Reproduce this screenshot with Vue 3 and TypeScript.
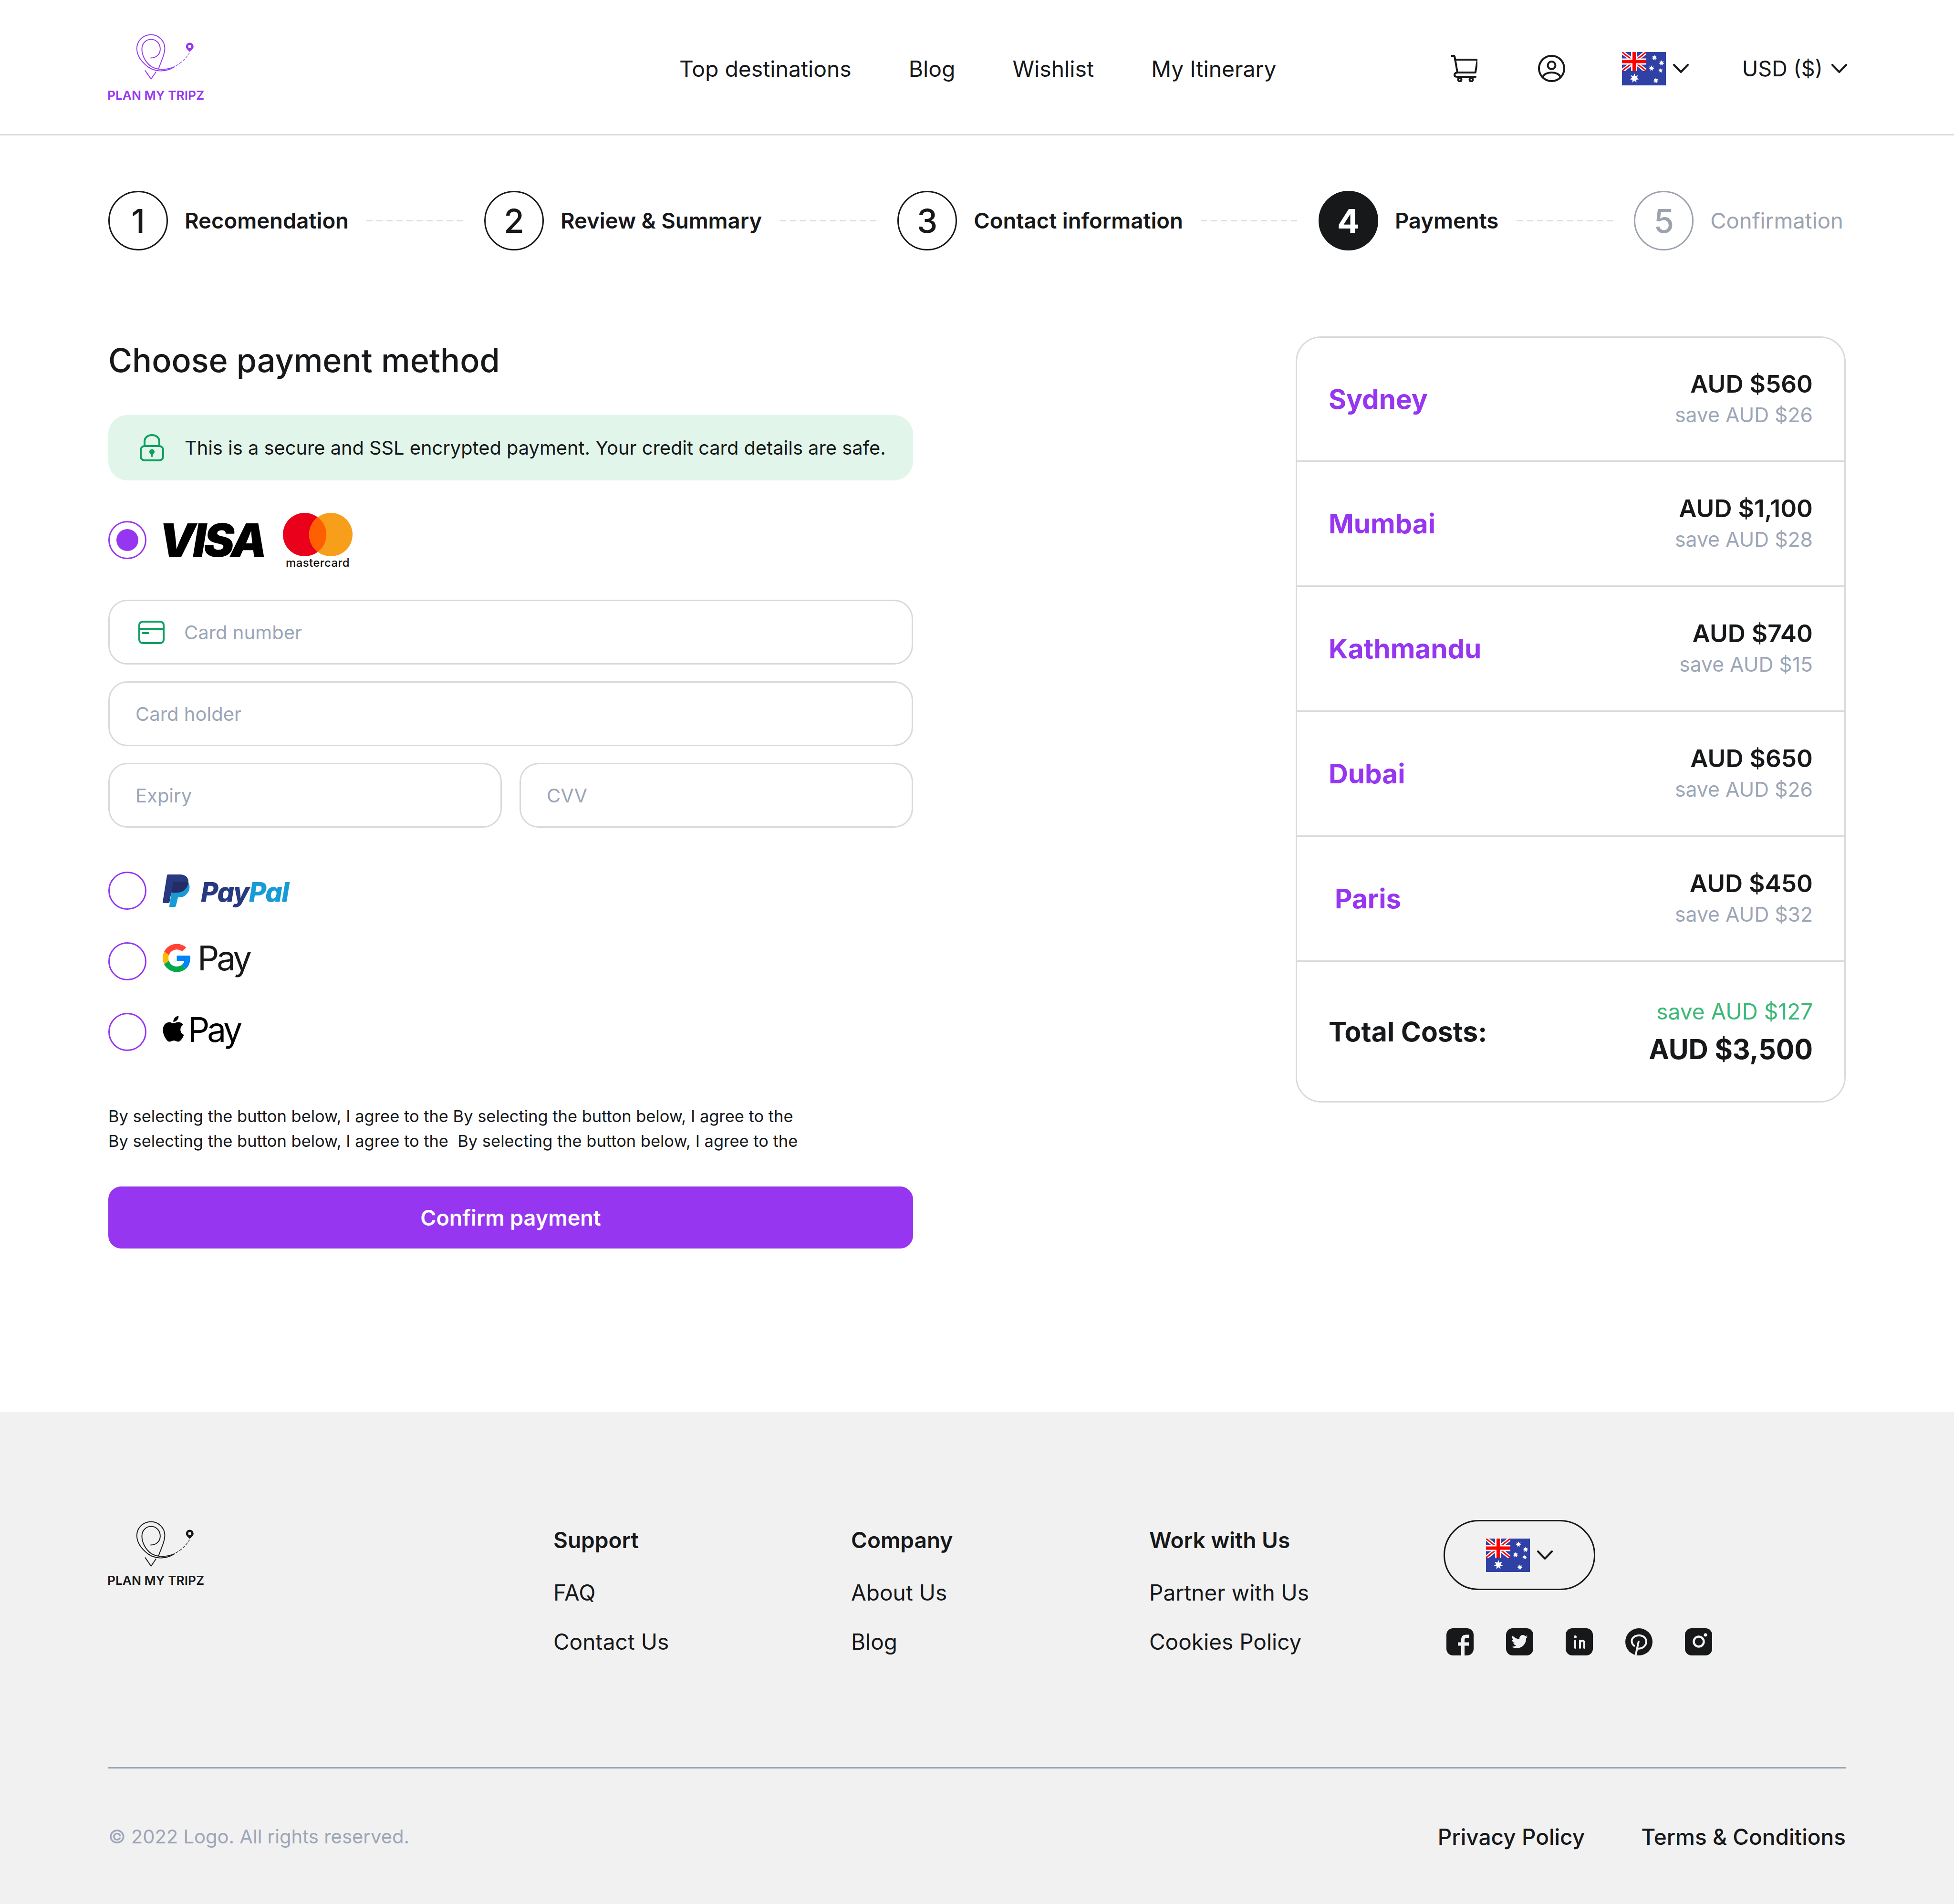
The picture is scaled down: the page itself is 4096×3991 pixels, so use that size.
<script setup lang="ts">
const steps = [
  { n: 1, label: 'Recomendation', state: 'done' },
  { n: 2, label: 'Review & Summary', state: 'done' },
  { n: 3, label: 'Contact information', state: 'done' },
  { n: 4, label: 'Payments', state: 'active' },
  { n: 5, label: 'Confirmation', state: 'todo' }
]

const cities = [
  { name: 'Sydney', price: 'AUD $560', save: 'save AUD $26' },
  { name: 'Mumbai', price: 'AUD $1,100', save: 'save AUD $28' },
  { name: 'Kathmandu', price: 'AUD $740', save: 'save AUD $15' },
  { name: 'Dubai', price: 'AUD $650', save: 'save AUD $26' },
  { name: 'Paris', price: 'AUD $450', save: 'save AUD $32', indent: true }
]

const footerCols = [
  { title: 'Support', links: ['FAQ', 'Contact Us'] },
  { title: 'Company', links: ['About Us', 'Blog'] },
  { title: 'Work with Us', links: ['Partner with Us', 'Cookies Policy'] }
]

// 7 pointed stars for the flag
function star(cx: number, cy: number, r: number) {
  const pts: string[] = []
  for (let i = 0; i < 14; i++) {
    const rad = i % 2 ? r * 0.5 : r
    const a = (Math.PI * i) / 7 - Math.PI / 2
    pts.push(`${(cx + rad * Math.cos(a)).toFixed(2)},${(cy + rad * Math.sin(a)).toFixed(2)}`)
  }
  return pts.join(' ')
}

const flagStars = [
  star(68, 12, 6),
  star(83, 23, 6),
  star(62, 34, 6),
  star(81, 39, 5),
  star(26, 55, 10),
  star(71, 60, 6)
]
</script>

<template>
  <div class="page">
    <svg class="defs" aria-hidden="true">
      <symbol id="logo-mark" viewBox="300 125 390 305">
        <g fill="none" stroke="currentColor" stroke-width="6" stroke-linecap="round" stroke-linejoin="round">
          <path d="M557 345C510 375 440 385 385 345C340 310 312 270 312 225C312 175 352 135 405 135C455 135 495 175 495 225C495 265 470 310 455 355" />
          <path d="M437 378L405 425L367 370" />
          <path d="M403 287C440 287 465 262 465 228C465 192 438 165 405 165C372 165 345 192 345 228C345 270 370 320 410 345C450 368 510 365 557 345" />
          <path d="M568 338Q620 310 656 254" stroke-width="4" stroke-dasharray="16 12" />
        </g>
        <path fill="currentColor" fill-rule="evenodd" d="M658 187a25 25 0 0 1 25 25c0 14-14 24-25 34c-11-10-25-20-25-34a25 25 0 0 1 25-25zm0 15a10 10 0 1 0 0 20a10 10 0 0 0 0-20z" />
      </symbol>
      <symbol id="flag-au" viewBox="0 0 92 70">
        <rect width="92" height="70" fill="#2f41a5" />
        <svg width="51" height="40" viewBox="0 0 51 40">
          <path d="M0 0L51 40M51 0L0 40" stroke="#fff" stroke-width="8" />
          <path d="M0 0L51 40M51 0L0 40" stroke="#f00" stroke-width="3" />
          <path d="M25.500 0V40M0 20H51" stroke="#fff" stroke-width="13" />
          <path d="M25.500 0V40M0 20H51" stroke="#f00" stroke-width="7" />
        </svg>
        <polygon v-for="(pts, i) in flagStars" :key="i" :points="pts" fill="#fff" />
      </symbol>
      <symbol id="chevron" viewBox="0 0 33 19">
        <path d="M2 2L16.500 17L31 2" fill="none" stroke="currentColor" stroke-width="4" stroke-linecap="round" stroke-linejoin="round" />
      </symbol>
    </svg>

    <header class="topbar">
      <div class="logo brand-purple">
        <svg class="logo-mark"><use href="#logo-mark" /></svg>
        <span class="logo-text">PLAN MY TRIPZ</span>
      </div>
      <nav class="nav">
        <a>Top destinations</a>
        <a>Blog</a>
        <a>Wishlist</a>
        <a>My Itinerary</a>
      </nav>
      <div class="tools">
        <svg class="cart" viewBox="0 0 55 57" fill="none" stroke="currentColor" stroke-width="4" stroke-linecap="round" stroke-linejoin="round">
          <path d="M1 2H5Q7 2 7.500 5L13 37Q7 38 7 42Q7 46 13 46H51" />
          <path d="M8 10H51Q55 10 54.500 14L51 36Q50.800 37 49 37H13" />
          <circle cx="18" cy="52" r="3.500" />
          <circle cx="42" cy="52" r="3.500" />
        </svg>
        <svg class="user" viewBox="0 0 57 57" fill="none" stroke="currentColor" stroke-width="4">
          <circle cx="28.500" cy="28.500" r="26.500" />
          <circle cx="28.500" cy="22" r="8" />
          <path d="M9 47C13 40 20 37 28.500 37C37 37 44 40 48 47" />
        </svg>
        <div class="flag-select">
          <svg class="flag"><use href="#flag-au" /></svg>
          <svg class="chev"><use href="#chevron" /></svg>
        </div>
        <div class="currency">
          <span>USD ($)</span>
          <svg class="chev"><use href="#chevron" /></svg>
        </div>
      </div>
    </header>

    <main class="main">
      <div class="steps">
        <template v-for="(s, i) in steps" :key="s.n">
          <div class="step" :class="s.state">
            <span class="step-num">{{ s.n }}</span>
            <span class="step-label">{{ s.label }}</span>
          </div>
          <i v-if="i < steps.length - 1" class="step-dash"></i>
        </template>
      </div>

      <div class="checkout">
        <section class="pay">
          <h1>Choose payment method</h1>
          <div class="secure">
            <svg class="lock" viewBox="0 0 51 57" fill="none" stroke="currentColor" stroke-width="4" stroke-linecap="round">
              <path d="M10 25V15.500C10 7 17 2 25.500 2C34 2 41 7 41 15.500V25" />
              <rect x="2" y="25" width="47" height="30" rx="8" />
              <circle cx="25.500" cy="37" r="3.500" fill="currentColor" />
              <path d="M25.500 38V46" />
            </svg>
            <span>This is a secure and SSL encrypted payment. Your credit card details are safe.</span>
          </div>

          <div class="card-row">
            <span class="radio checked"></span>
            <span class="visa">VISA</span>
            <div class="mc">
              <svg class="mc-mark" viewBox="0 0 146 91">
                <circle cx="45.500" cy="45.500" r="45.500" fill="#eb001b" />
                <circle cx="100.500" cy="45.500" r="45.500" fill="#f79e1b" />
                <path d="M73 9.100a45.500 45.500 0 0 1 0 72.800a45.500 45.500 0 0 1 0-72.800z" fill="#ff5f00" />
              </svg>
              <span>mastercard</span>
            </div>
          </div>

          <div class="fields">
            <div class="field with-icon">
              <svg class="card-icon" viewBox="0 0 55 49" fill="none" stroke="currentColor" stroke-width="4" stroke-linecap="round">
                <rect x="2" y="2" width="51" height="45" rx="7" />
                <path d="M2 17H53" />
                <path d="M9 26H21" />
              </svg>
              <span>Card number</span>
            </div>
            <div class="field">Card holder</div>
            <div class="field-pair">
              <div class="field">Expiry</div>
              <div class="field">CVV</div>
            </div>
          </div>

          <div class="methods">
            <div class="method">
              <span class="radio"></span>
              <div class="paypal">
                <svg class="paypal-mark" viewBox="0 0 58 68">
                  <path fill="#27397f" d="M11 0H36C48 0 55 7 54 17C52 30 43 38 30 38H18L14 60H1Q0 60 0 58L9 2Q9.500 0 11 0Z" />
                  <path fill="#179bd7" d="M22 15H50Q53 15 54 17C58 24 57 33 52 39C48 45 42 48 35 48H32L28 65Q27.500 68 25 68H14.500Q13.500 68 14 66Z" />
                  <path fill="#232c65" d="M22 15H50Q53 15 54 17C52 30 43 38 30 38H18Z" />
                </svg>
                <span class="paypal-text"><b>Pay</b><em>Pal</em></span>
              </div>
            </div>
            <div class="method">
              <span class="radio"></span>
              <div class="gpay">
                <svg class="g-mark" viewBox="0 0 48 48">
                  <path fill="#ff4335" d="M24 9.500c3.540 0 6.710 1.220 9.210 3.600l6.850-6.850C35.900 2.380 30.470 0 24 0 14.620 0 6.510 5.380 2.560 13.220l7.980 6.190C12.430 13.720 17.740 9.500 24 9.500z" />
                  <path fill="#0085f7" d="M46.980 24.550c0-1.570-.15-3.090-.38-4.550H24v9.020h12.940c-.58 2.960-2.260 5.480-4.780 7.180l7.730 6c4.510-4.180 7.090-10.360 7.090-17.650z" />
                  <path fill="#ffba00" d="M10.530 28.590c-.48-1.450-.76-2.990-.76-4.590s.27-3.140.76-4.590l-7.980-6.190C.92 16.460 0 20.120 0 24c0 3.880.92 7.540 2.560 10.780l7.970-6.190z" />
                  <path fill="#00a94b" d="M24 48c6.480 0 11.930-2.130 15.890-5.810l-7.730-6c-2.150 1.450-4.920 2.300-8.160 2.300-6.260 0-11.570-4.220-13.470-9.910l-7.980 6.190C6.510 42.620 14.620 48 24 48z" />
                </svg>
                <span class="pay-word">Pay</span>
              </div>
            </div>
            <div class="method">
              <span class="radio"></span>
              <div class="apay">
                <svg class="apple-mark" viewBox="2 0 20 24">
                  <path fill="#000" d="M12.152 6.896c-.948 0-2.415-1.078-3.960-1.040-2.040.027-3.910 1.183-4.961 3.014-2.117 3.675-.546 9.103 1.519 12.090 1.013 1.454 2.208 3.090 3.792 3.039 1.520-.065 2.090-.987 3.935-.987 1.831 0 2.350.987 3.960.948 1.637-.026 2.676-1.480 3.676-2.948 1.156-1.688 1.636-3.325 1.662-3.415-.039-.013-3.182-1.221-3.220-4.857-.026-3.040 2.480-4.494 2.597-4.559-1.429-2.090-3.623-2.324-4.390-2.376-2-.156-3.675 1.090-4.610 1.090zM15.530 3.830c.843-1.012 1.400-2.427 1.245-3.830-1.207.052-2.662.805-3.532 1.818-.780.896-1.454 2.338-1.273 3.714 1.338.104 2.715-.688 3.559-1.701" />
                </svg>
                <span class="pay-word">Pay</span>
              </div>
            </div>
          </div>

          <p class="terms">
            By selecting the button below, I agree to the By selecting the button below, I agree to the<br />
            By selecting the button below, I agree to the&nbsp; By selecting the button below, I agree to the
          </p>

          <button class="confirm">Confirm payment</button>
        </section>

        <aside class="summary">
          <div v-for="c in cities" :key="c.name" class="summary-row">
            <span class="city" :class="{ indent: c.indent }">{{ c.name }}</span>
            <div class="amount">
              <div class="price">{{ c.price }}</div>
              <div class="save">{{ c.save }}</div>
            </div>
          </div>
          <div class="summary-row total">
            <span class="total-label">Total Costs:</span>
            <div class="amount">
              <div class="save green">save AUD $127</div>
              <div class="total-price">AUD $3,500</div>
            </div>
          </div>
        </aside>
      </div>
    </main>

    <footer class="footer">
      <div class="footer-top">
        <div class="logo">
          <svg class="logo-mark"><use href="#logo-mark" /></svg>
          <span class="logo-text">PLAN MY TRIPZ</span>
        </div>
        <div v-for="col in footerCols" :key="col.title" class="footer-col">
          <h4>{{ col.title }}</h4>
          <a v-for="l in col.links" :key="l">{{ l }}</a>
        </div>
        <div class="footer-side">
          <div class="lang-pill">
            <svg class="flag"><use href="#flag-au" /></svg>
            <svg class="chev"><use href="#chevron" /></svg>
          </div>
          <div class="socials">
            <svg viewBox="0 0 57 57">
              <rect width="57" height="57" rx="14" fill="#17181a" />
              <path d="M34.500 57V24Q34.500 17 42 17H47M24 33H47" fill="none" stroke="#f1f1f1" stroke-width="7" />
            </svg>
            <svg viewBox="0 0 57 57">
              <rect width="57" height="57" rx="14" fill="#17181a" />
              <path transform="translate(11.500 11) scale(1.420)" fill="#f1f1f1" d="M23.953 4.570a10 10 0 01-2.825.775 4.958 4.958 0 002.163-2.723c-.951.555-2.005.959-3.127 1.184a4.920 4.920 0 00-8.384 4.482C7.690 8.095 4.067 6.130 1.640 3.162a4.822 4.822 0 00-.666 2.475c0 1.710.870 3.213 2.188 4.096a4.904 4.904 0 01-2.228-.616v.060a4.923 4.923 0 003.946 4.827 4.996 4.996 0 01-2.212.085 4.936 4.936 0 004.604 3.417 9.867 9.867 0 01-6.102 2.105c-.390 0-.779-.023-1.170-.067a13.995 13.995 0 007.557 2.209c9.053 0 13.998-7.496 13.998-13.985 0-.210 0-.420-.015-.630A9.935 9.935 0 0024 4.590z" />
            </svg>
            <svg viewBox="0 0 57 57">
              <rect width="57" height="57" rx="14" fill="#17181a" />
              <circle cx="20" cy="18" r="3" fill="#f1f1f1" />
              <path d="M20 26V41M30 41V26M30 32Q31 26 35 26Q39 26 39 32V41" fill="none" stroke="#f1f1f1" stroke-width="4" stroke-linecap="round" />
            </svg>
            <svg viewBox="0 0 57 57">
              <circle cx="28.500" cy="28.500" r="28.500" fill="#17181a" />
              <path d="M18.500 36.700C15 34 13.500 30 13.500 26.700C13.500 20 20 15 29 15C37 15 43.800 20 43.800 28.300C43.800 36 37 42.700 27 42.700M27.800 28.300L22 55" fill="none" stroke="#f1f1f1" stroke-width="4" stroke-linecap="round" />
            </svg>
            <svg viewBox="0 0 57 57">
              <rect width="57" height="57" rx="14" fill="#17181a" />
              <circle cx="29" cy="28" r="10.500" fill="none" stroke="#f1f1f1" stroke-width="4.500" />
              <circle cx="43" cy="14" r="3.500" fill="#f1f1f1" />
            </svg>
          </div>
        </div>
      </div>
      <div class="footer-bottom">
        <span class="copy">© 2022 Logo. All rights reserved.</span>
        <div class="legal">
          <a>Privacy Policy</a>
          <a>Terms &amp; Conditions</a>
        </div>
      </div>
    </footer>
  </div>
</template>

<style>
html,
body {
  margin: 0;
  background: #fff;
}
</style>

<style scoped>
.page {
  width: 4096px;
  font-family: Inter, 'Noto Sans', sans-serif;
  color: #17181a;
}

.defs {
  display: none;
}

/* header */
.topbar {
  height: 284px;
  box-sizing: border-box;
  border-bottom: 3px solid #dcdcdc;
  padding: 6px 224px 0 227px;
  display: flex;
  align-items: center;
}

.logo {
  width: 206px;
  margin-left: -2px;
  display: flex;
  flex-direction: column;
  align-items: flex-end;
}

.topbar .logo {
  margin-bottom: 6px;
}

.brand-purple {
  color: #9636f0;
}

.logo-mark {
  width: 125px;
  height: 99px;
  margin-right: 23px;
}

.logo-text {
  width: 206px;
  margin-top: 15px;
  font-size: 26.300px;
  line-height: 26px;
  font-weight: 600;
  white-space: nowrap;
}

.topbar .logo-text {
  margin-top: 19px;
}

.nav {
  margin-left: 993px;
  display: flex;
  gap: 120px;
  font-size: 46.300px;
  line-height: 60px;
  white-space: nowrap;
}

.tools {
  margin-left: auto;
  display: flex;
  align-items: center;
}

.cart {
  width: 55px;
  height: 57px;
}

.user {
  width: 57px;
  height: 57px;
  margin-left: 127px;
}

.flag-select {
  margin-left: 119px;
  display: flex;
  align-items: center;
  gap: 15px;
}

.flag {
  width: 92px;
  height: 70px;
}

.chev {
  width: 33px;
  height: 19px;
}

.currency {
  margin-left: 112px;
  display: flex;
  align-items: center;
  gap: 18px;
  font-size: 45px;
  line-height: 60px;
  white-space: nowrap;
}

/* stepper */
.main {
  padding: 116px 227px 342px;
}

.steps {
  padding-right: 5px;
  display: flex;
  align-items: center;
  justify-content: space-between;
}

.step {
  display: flex;
  align-items: center;
  gap: 35px;
  white-space: nowrap;
}

.step-num {
  width: 125px;
  height: 125px;
  box-sizing: border-box;
  border: 3px solid #17181a;
  border-radius: 50%;
  display: flex;
  align-items: center;
  justify-content: center;
  font-size: 69px;
  font-weight: 500;
}

.step-label {
  font-size: 45.500px;
  font-weight: 600;
}

.step.active .step-num {
  background: #17181a;
  color: #fff;
  font-weight: 700;
}

.step.todo .step-num {
  border-color: #9ca3af;
  color: #9ca3af;
}

.step.todo .step-label {
  color: #9ca3af;
  font-weight: 400;
}

.step-dash {
  width: 209px;
  height: 3px;
  background: repeating-linear-gradient(90deg, #dedede 0 13px, transparent 13px 21px);
}

/* checkout */
.checkout {
  margin-top: 180px;
  display: flex;
  justify-content: space-between;
  align-items: flex-start;
}

.pay {
  width: 1687px;
}

h1 {
  margin: 0;
  font-size: 68.300px;
  line-height: 100px;
  font-weight: 500;
}

.secure {
  margin-top: 65px;
  height: 137px;
  box-sizing: border-box;
  border-radius: 40px;
  background: #e2f5ea;
  padding-left: 66px;
  display: flex;
  align-items: center;
  gap: 43px;
  font-size: 39.800px;
  white-space: nowrap;
}

.lock {
  width: 51px;
  height: 57px;
  flex: none;
  color: #0e9f5f;
}

.card-row {
  margin-top: 68px;
  height: 114px;
  display: flex;
  align-items: center;
}

.radio {
  width: 80px;
  height: 80px;
  flex: none;
  box-sizing: border-box;
  border: 3.500px solid #9636f0;
  border-radius: 50%;
  display: flex;
  align-items: center;
  justify-content: center;
}

.radio.checked::after {
  content: '';
  width: 46px;
  height: 46px;
  border-radius: 50%;
  background: #9636f0;
}

.visa {
  margin-left: 26px;
  width: 212px;
  font-size: 96px;
  line-height: 68px;
  font-weight: 900;
  font-style: italic;
  letter-spacing: -5px;
  color: #000;
  white-space: nowrap;
}

.mc {
  margin-left: 48px;
  width: 146px;
  display: flex;
  flex-direction: column;
  align-items: center;
}

.mc-mark {
  width: 146px;
  height: 91px;
}

.mc span {
  margin-top: 4px;
  font-size: 24px;
  line-height: 20px;
  font-weight: 500;
  color: #111;
  letter-spacing: 0.4px;
}

.fields {
  margin-top: 68px;
  display: flex;
  flex-direction: column;
  gap: 35px;
}

.field {
  height: 136px;
  box-sizing: border-box;
  border: 3.500px solid #d9d9d9;
  border-radius: 40px;
  padding-left: 54px;
  display: flex;
  align-items: center;
  font-size: 40px;
  color: #9aa5b8;
}

.with-icon {
  padding-left: 60px;
  gap: 41px;
}

.card-icon {
  width: 55px;
  height: 49px;
  flex: none;
  color: #0e9f5f;
}

.field-pair {
  display: grid;
  grid-template-columns: 1fr 1fr;
  gap: 37px;
}

.methods {
  margin-top: 92px;
  display: flex;
  flex-direction: column;
  gap: 69px;
}

.method {
  display: flex;
  align-items: flex-start;
  gap: 34px;
  height: 79px;
}

.paypal {
  margin-top: 6px;
  display: flex;
  align-items: flex-start;
  gap: 22px;
}

.paypal-mark {
  width: 58px;
  height: 68px;
}

.paypal-text {
  margin-top: 7px;
  font-size: 56px;
  line-height: 60px;
  font-weight: 800;
  font-style: italic;
  letter-spacing: -1.500px;
}

.paypal-text b {
  font-weight: 800;
  color: #27397f;
}

.paypal-text em {
  color: #179bd7;
}

.gpay {
  margin-top: 3px;
  display: flex;
  align-items: flex-start;
  gap: 14px;
}

.g-mark {
  width: 59px;
  height: 60px;
}

.pay-word {
  margin-top: -10px;
  font-size: 71px;
  line-height: 80px;
  letter-spacing: -5px;
  color: #17181a;
}

.apay {
  margin-top: 6px;
  display: flex;
  align-items: flex-start;
  gap: 8px;
}

.apple-mark {
  width: 45px;
  height: 55px;
}

.apay .pay-word {
  margin-top: -11px;
  color: #000;
}

.terms {
  margin: 112px 0 0;
  font-size: 34.450px;
  line-height: 52px;
  white-space: nowrap;
}

.confirm {
  margin-top: 69px;
  width: 100%;
  height: 130px;
  border: 0;
  border-radius: 27px;
  background: #9636f0;
  color: #fff;
  font-family: inherit;
  font-size: 45px;
  font-weight: 600;
}

/* order summary */
.summary {
  width: 1153px;
  box-sizing: border-box;
  border: 3px solid #dadada;
  border-radius: 53px;
}

.summary-row {
  height: 262px;
  box-sizing: border-box;
  border-bottom: 3px solid #dadada;
  padding: 0 66px;
  display: flex;
  align-items: center;
  justify-content: space-between;
}

.summary-row:first-child {
  height: 260px;
}

.summary-row.total {
  height: 292px;
  border-bottom: 0;
}

.city {
  font-size: 56.600px;
  font-weight: 700;
  color: #9636f0;
}

.city.indent {
  margin-left: 13px;
}

.amount {
  margin-bottom: 6px;
  text-align: right;
  display: flex;
  flex-direction: column;
  gap: 4px;
}

.total .amount {
  margin: 6px 0 0;
}

.price {
  font-size: 51.400px;
  line-height: 68px;
  font-weight: 600;
}

.save {
  font-size: 42.700px;
  line-height: 56px;
  color: #9ca6b7;
}

.save.green {
  font-size: 46px;
  color: #3cb878;
}

.total-label {
  font-size: 57px;
  font-weight: 700;
}

.total-price {
  margin-top: 10px;
  font-size: 57.200px;
  line-height: 76px;
  font-weight: 700;
}

/* footer */
.footer {
  background: #f1f1f1;
  height: 1032px;
  box-sizing: border-box;
  padding: 227px 227px 0;
}

.footer-top {
  height: 521px;
  box-sizing: border-box;
  border-bottom: 3px solid #9ea5b5;
  display: grid;
  grid-template-columns: 933px 624px 625px 617px auto;
  align-items: start;
}

.footer-col {
  padding-top: 12px;
  display: flex;
  flex-direction: column;
  gap: 43px;
  font-size: 46px;
  line-height: 60px;
}

h4 {
  margin: 0 0 7px;
  font-size: 46px;
  line-height: 60px;
  font-weight: 600;
}

.lang-pill {
  width: 318px;
  height: 147px;
  box-sizing: border-box;
  border: 3.500px solid #17181a;
  border-radius: 74px;
  display: flex;
  align-items: center;
  justify-content: center;
  gap: 15px;
}

.socials {
  margin-top: 80px;
  margin-left: 6px;
  display: flex;
  gap: 68px;
}

.socials svg {
  width: 57px;
  height: 57px;
}

.footer-bottom {
  margin-top: 113px;
  display: flex;
  align-items: center;
  justify-content: space-between;
  line-height: 60px;
}

.copy {
  font-size: 40px;
  color: #9ca6b7;
}

.legal {
  display: flex;
  gap: 118px;
  font-size: 46px;
  font-weight: 500;
}
</style>
